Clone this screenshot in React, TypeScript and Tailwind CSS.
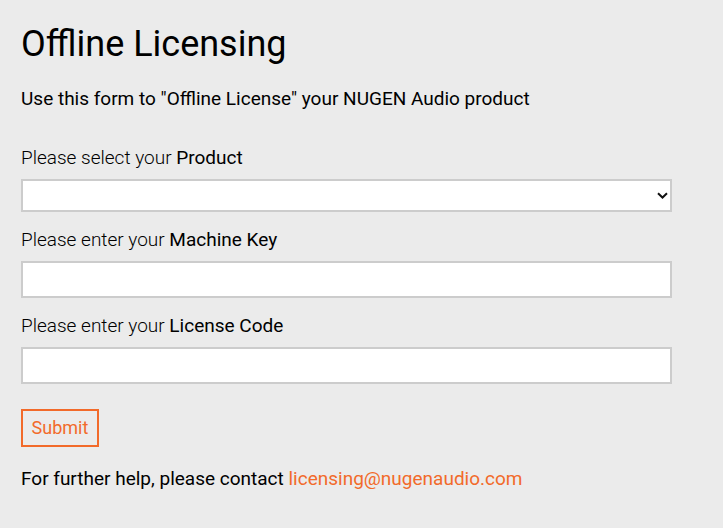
import React from 'react';

const font = { fontFamily: 'Roboto, "Noto Sans", sans-serif' };

function Field({ lead, strong, children }: { lead: string; strong: string; children: React.ReactNode }) {
  return (
    <div className="mt-4">
      <label className="block text-[19px] leading-6 font-light text-black mb-[9px]">
        {lead} <span className="font-normal">{strong}</span>
      </label>
      {children}
    </div>
  );
}

export default function App() {
  return (
    <div className="min-h-[528px] bg-[#ebebeb] pl-[21px] pt-6 text-black" style={font}>
      <h1 className="text-[36px] leading-10 font-normal">Offline Licensing</h1>
      <p className="mt-[23px] text-[19px] leading-6">
        Use this form to "Offline License" your NUGEN Audio product
      </p>

      <form className="pt-[19px] w-[651px]">
        <Field lead="Please select your" strong="Product">
          <div className="relative">
            <select className="block w-full h-[33px] appearance-none bg-white border-2 border-[#cccccc] outline-none" />
            <svg
              className="absolute right-[4px] top-[13px] pointer-events-none"
              width="11"
              height="7"
              viewBox="0 0 11 7"
            >
              <path d="M1 1.2 L5.5 5.5 L10 1.2" fill="none" stroke="#111" strokeWidth="2" />
            </svg>
          </div>
        </Field>
        <Field lead="Please enter your" strong="Machine Key">
          <input className="block w-full h-[37px] bg-white border-2 border-[#cccccc] outline-none" />
        </Field>
        <Field lead="Please enter your" strong="License Code">
          <input className="block w-full h-[37px] bg-white border-2 border-[#cccccc] outline-none" />
        </Field>

        <button
          type="button"
          className="mt-[25px] w-[78px] h-[38px] border-2 border-[#f26a2a] text-[#f26a2a] text-[18px] leading-6"
        >
          Submit
        </button>
      </form>

      <p className="mt-5 text-[19px] leading-6">
        For further help, please contact{' '}
        <a className="text-[#f26a2a]" href="#">
          licensing@nugenaudio.com
        </a>
      </p>
    </div>
  );
}
